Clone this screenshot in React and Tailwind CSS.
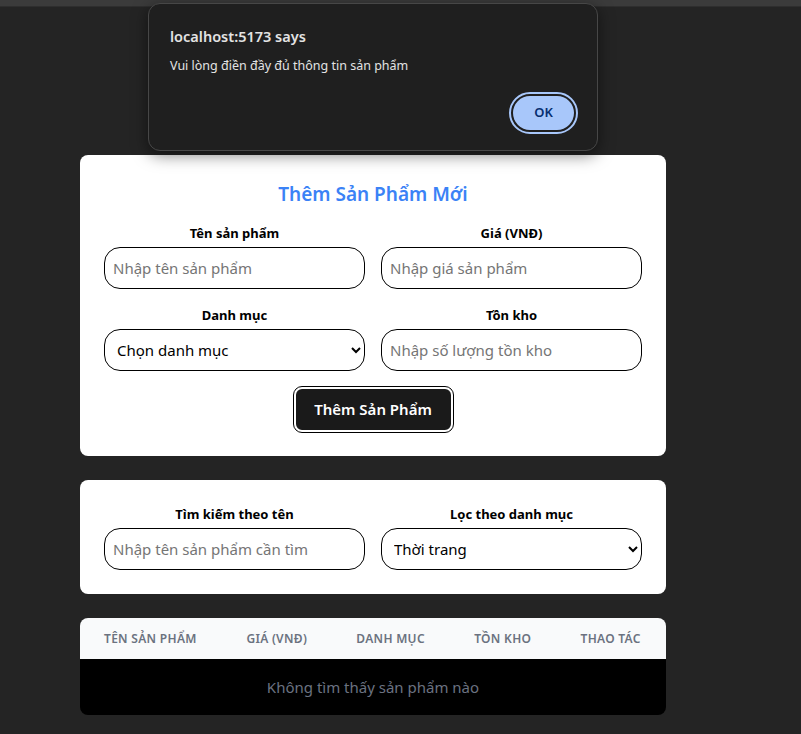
import React from "react";

const font = { fontFamily: '"Noto Sans", "Liberation Sans", sans-serif' };

function Field({ label, children }) {
  return (
    <div className="flex flex-col">
      <label className="text-[13px] leading-[20px] font-bold text-black text-center mb-1">{label}</label>
      {children}
    </div>
  );
}

const inputCls =
  "h-[42px] w-full rounded-2xl border border-black bg-white px-2 text-[15px] text-black placeholder:text-[#757575] outline-none";

export default function App() {
  return (
    <div className="relative min-h-[734px] w-[801px] bg-[#242424] overflow-hidden" style={font}>
      <div className="h-[7px] bg-[#3b3b3b] border-b border-[#2e2e2e]" />
      <div className="pl-[80px] pt-[148px] flex flex-col gap-6 w-[666px]">
        {/* Add product card */}
        <div className="bg-white rounded-lg p-6 flex flex-col">
          <h2 className="text-[19px] leading-[28px] font-semibold text-[#3b82f6] text-center mb-[15px] pt-px">Thêm Sản Phẩm Mới</h2>
          <div className="grid grid-cols-2 gap-x-4 gap-y-4">
            <Field label="Tên sản phẩm">
              <input className={inputCls} placeholder="Nhập tên sản phẩm" />
            </Field>
            <Field label="Giá (VNĐ)">
              <input className={inputCls} placeholder="Nhập giá sản phẩm" />
            </Field>
            <Field label="Danh mục">
              <select className={inputCls + " px-2"} defaultValue="">
                <option value="">Chọn danh mục</option>
                <option>Thời trang</option>
              </select>
            </Field>
            <Field label="Tồn kho">
              <input className={inputCls} placeholder="Nhập số lượng tồn kho" />
            </Field>
          </div>
          <div className="flex justify-center mt-4">
            <button className="h-[45px] w-[159px] rounded-lg bg-[#1a1a1a] text-white text-[15px] font-semibold border-2 border-white outline outline-1 outline-black">
              Thêm Sản Phẩm
            </button>
          </div>
        </div>

        {/* Filter card */}
        <div className="bg-white rounded-lg p-6">
          <div className="grid grid-cols-2 gap-x-4">
            <Field label="Tìm kiếm theo tên">
              <input className={inputCls} placeholder="Nhập tên sản phẩm cần tìm" />
            </Field>
            <Field label="Lọc theo danh mục">
              <select className={inputCls + " px-2"} defaultValue="tt">
                <option value="">Tất cả</option>
                <option value="tt">Thời trang</option>
              </select>
            </Field>
          </div>
        </div>

        {/* Table */}
        <div className="rounded-lg overflow-hidden">
          <table className="w-full border-collapse">
            <thead className="bg-[#f9fafb]">
              <tr className="h-[41px]">
                {["Tên sản phẩm", "Giá (VNĐ)", "Danh mục", "Tồn kho", "Thao tác"].map((h) => (
                  <th key={h} className="px-6 text-[12px] font-semibold uppercase tracking-wide text-[#6b7280] text-left whitespace-nowrap">
                    {h}
                  </th>
                ))}
              </tr>
            </thead>
            <tbody className="bg-black">
              <tr className="h-[56px]">
                <td colSpan={5} className="text-center text-[15px] text-[#6b7280]">Không tìm thấy sản phẩm nào</td>
              </tr>
            </tbody>
          </table>
        </div>
      </div>

      {/* Browser alert dialog */}
      <div className="absolute left-[148px] top-[3px] w-[450px] h-[148px] rounded-xl bg-[#1f1f1f] border border-[#474747] shadow-[0_4px_16px_rgba(0,0,0,0.5)] px-[21px] pt-[22px]">
        <div className="text-[14.5px] leading-[20px] font-semibold text-[#e3e3e3]">localhost:5173 says</div>
        <div className="mt-[11px] text-[12.5px] leading-[18px] text-[#e3e3e3]">Vui lòng điền đầy đủ thông tin sản phẩm</div>
        <div className="flex justify-end mt-[21px] pr-[2px]">
          <button className="h-[34px] w-[61px] rounded-full bg-[#a8c7fa] text-[#062e6f] text-[13px] font-semibold outline outline-2 outline-[#a8c7fa] outline-offset-2">
            OK
          </button>
        </div>
      </div>
    </div>
  );
}
